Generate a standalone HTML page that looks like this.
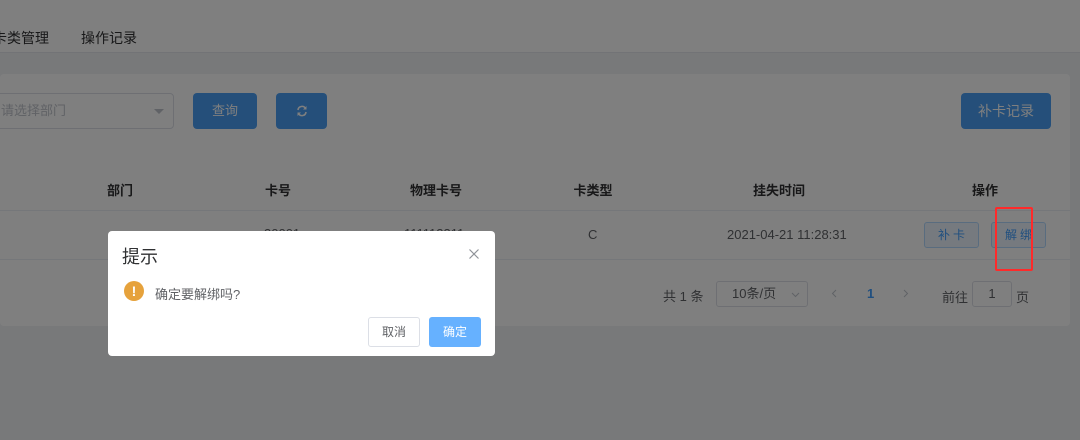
<!DOCTYPE html>
<html><head><meta charset="utf-8"><style>
*{margin:0;padding:0;box-sizing:border-box}
body{width:1080px;height:440px;overflow:hidden;position:relative;background:#f0f2f5;font-family:"Liberation Sans","Noto Sans CJK SC",sans-serif;font-size:14px;color:#606266}
.abs{position:absolute}
.top{left:0;top:0;width:1080px;height:53px;background:#fff;border-bottom:1px solid #e4e7ed}
.card{left:0;top:74px;width:1070px;height:252px;background:#fff;border-radius:4px}
.btn{position:absolute;background:#4a9ff5;color:#fff;border-radius:4px;font-size:13px;text-align:center}
.th{position:absolute;top:180px;font-weight:bold;color:#303133;font-size:13px;transform:translateX(-50%)}
.ob{position:absolute;border:1px solid #b3d8ff;background:#ecf5ff;color:#409eff;border-radius:3px;font-size:12px;text-align:center;line-height:24px;height:26px;width:55px;top:222px;letter-spacing:3px;text-indent:3px}
.overlay{left:0;top:0;width:1080px;height:440px;background:rgba(0,0,0,.5)}
.dlg{left:108px;top:231px;width:387px;height:125px;background:#fff;border-radius:4px}
</style></head><body>
<div class="abs top">
<div class="abs" style="left:-7px;top:28px;color:#303133">卡类管理</div>
<div class="abs" style="left:81px;top:28px;color:#303133">操作记录</div>
</div>
<div class="abs card">
<div class="abs" style="left:-10px;top:19px;width:184px;height:36px;border:1px solid #dcdfe6;border-radius:4px;color:#c0c4cc;font-size:13px;line-height:34px;padding-left:10px">请选择部门
<div class="abs" style="right:9px;top:15px;width:0;height:0;border-left:5px solid transparent;border-right:5px solid transparent;border-top:5px solid #c0c4cc"></div></div>
<div class="btn" style="left:193px;top:19px;width:64px;height:36px;line-height:36px">查询</div>
<div class="btn" style="left:276px;top:19px;width:51px;height:36px;line-height:36px">
<svg width="12" height="12" viewBox="0 0 12 12" style="margin-top:12px"><path d="M2 5A4 4 0 0 1 9.5 3.5M10 7A4 4 0 0 1 2.5 8.5" stroke="#fff" stroke-width="1.6" fill="none"/><path d="M10.5 1v3.5H7z M1.5 11V7.5H5z" fill="#fff"/></svg></div>
<div class="btn" style="left:961px;top:19px;width:90px;height:36px;line-height:36px;font-size:14px">补卡记录</div>
<div class="abs" style="left:0;top:136px;width:1070px;height:1px;background:#ebeef5"></div>
<div class="abs" style="left:0;top:185px;width:1070px;height:1px;background:#ebeef5"></div>
</div>
<div class="th" style="left:120px">部门</div>
<div class="th" style="left:278px">卡号</div>
<div class="th" style="left:436px">物理卡号</div>
<div class="th" style="left:593px">卡类型</div>
<div class="th" style="left:779px">挂失时间</div>
<div class="th" style="left:985px">操作</div>
<div class="abs" style="left:264px;top:226px;font-size:13px">30001</div>
<div class="abs" style="left:404px;top:226px;font-size:13px">111112311</div>
<div class="abs" style="left:588px;top:227px;font-size:13px">C</div>
<div class="abs" style="left:727px;top:227px;font-size:13px">2021-04-21 11:28:31</div>
<div class="ob" style="left:924px">补卡</div>
<div class="ob" style="left:991px">解绑</div>
<div class="abs" style="left:663px;top:286px;font-size:13px">共 1 条</div>
<div class="abs" style="left:716px;top:281px;width:92px;height:26px;border:1px solid #dcdfe6;border-radius:3px;font-size:13px;line-height:24px;padding-left:15px">10条/页
<svg class="abs" style="right:7px;top:10px" width="9" height="6" viewBox="0 0 9 6"><path d="M1 1l3.5 3.5L8 1" stroke="#c0c4cc" fill="none"/></svg></div>
<svg class="abs" style="left:831px;top:289px" width="6" height="9" viewBox="0 0 6 9"><path d="M5 1L1.5 4.5 5 8" stroke="#c0c4cc" fill="none"/></svg>
<div class="abs" style="left:867px;top:286px;color:#409eff;font-weight:bold;font-size:13px">1</div>
<svg class="abs" style="left:903px;top:289px" width="6" height="9" viewBox="0 0 6 9"><path d="M1 1l3.5 3.5L1 8" stroke="#c0c4cc" fill="none"/></svg>
<div class="abs" style="left:942px;top:287px;font-size:13px">前往</div>
<div class="abs" style="left:972px;top:281px;width:40px;height:26px;border:1px solid #dcdfe6;border-radius:3px;text-align:center;line-height:24px;font-size:13px">1</div>
<div class="abs" style="left:1016px;top:287px;font-size:13px">页</div>
<div class="abs overlay"></div>
<div class="abs" style="left:995px;top:207px;width:38px;height:64px;border:2px solid #ff2a2a;border-radius:2px"></div>
<div class="abs dlg">
<div class="abs" style="left:14px;top:12px;font-size:18px;color:#303133">提示</div>
<svg class="abs" style="left:361px;top:18px" width="10" height="10" viewBox="0 0 10 10"><path d="M0.5 0.5l9 9M9.5 0.5l-9 9" stroke="#909399" stroke-width="1.2"/></svg>
<div class="abs" style="left:16px;top:50px;width:20px;height:20px;border-radius:50%;background:#e6a23c;color:#fff;font-weight:bold;font-size:14px;text-align:center;line-height:20px">!</div>
<div class="abs" style="left:47px;top:53px;font-size:13px;color:#606266">确定要解绑吗?</div>
<div class="abs" style="left:260px;top:86px;width:52px;height:30px;border:1px solid #dcdfe6;border-radius:3px;text-align:center;line-height:28px;font-size:12px;color:#606266">取消</div>
<div class="abs" style="left:321px;top:86px;width:52px;height:30px;background:#66b1ff;border-radius:3px;text-align:center;line-height:30px;font-size:12px;color:#fff">确定</div>
</div>
</body></html>
